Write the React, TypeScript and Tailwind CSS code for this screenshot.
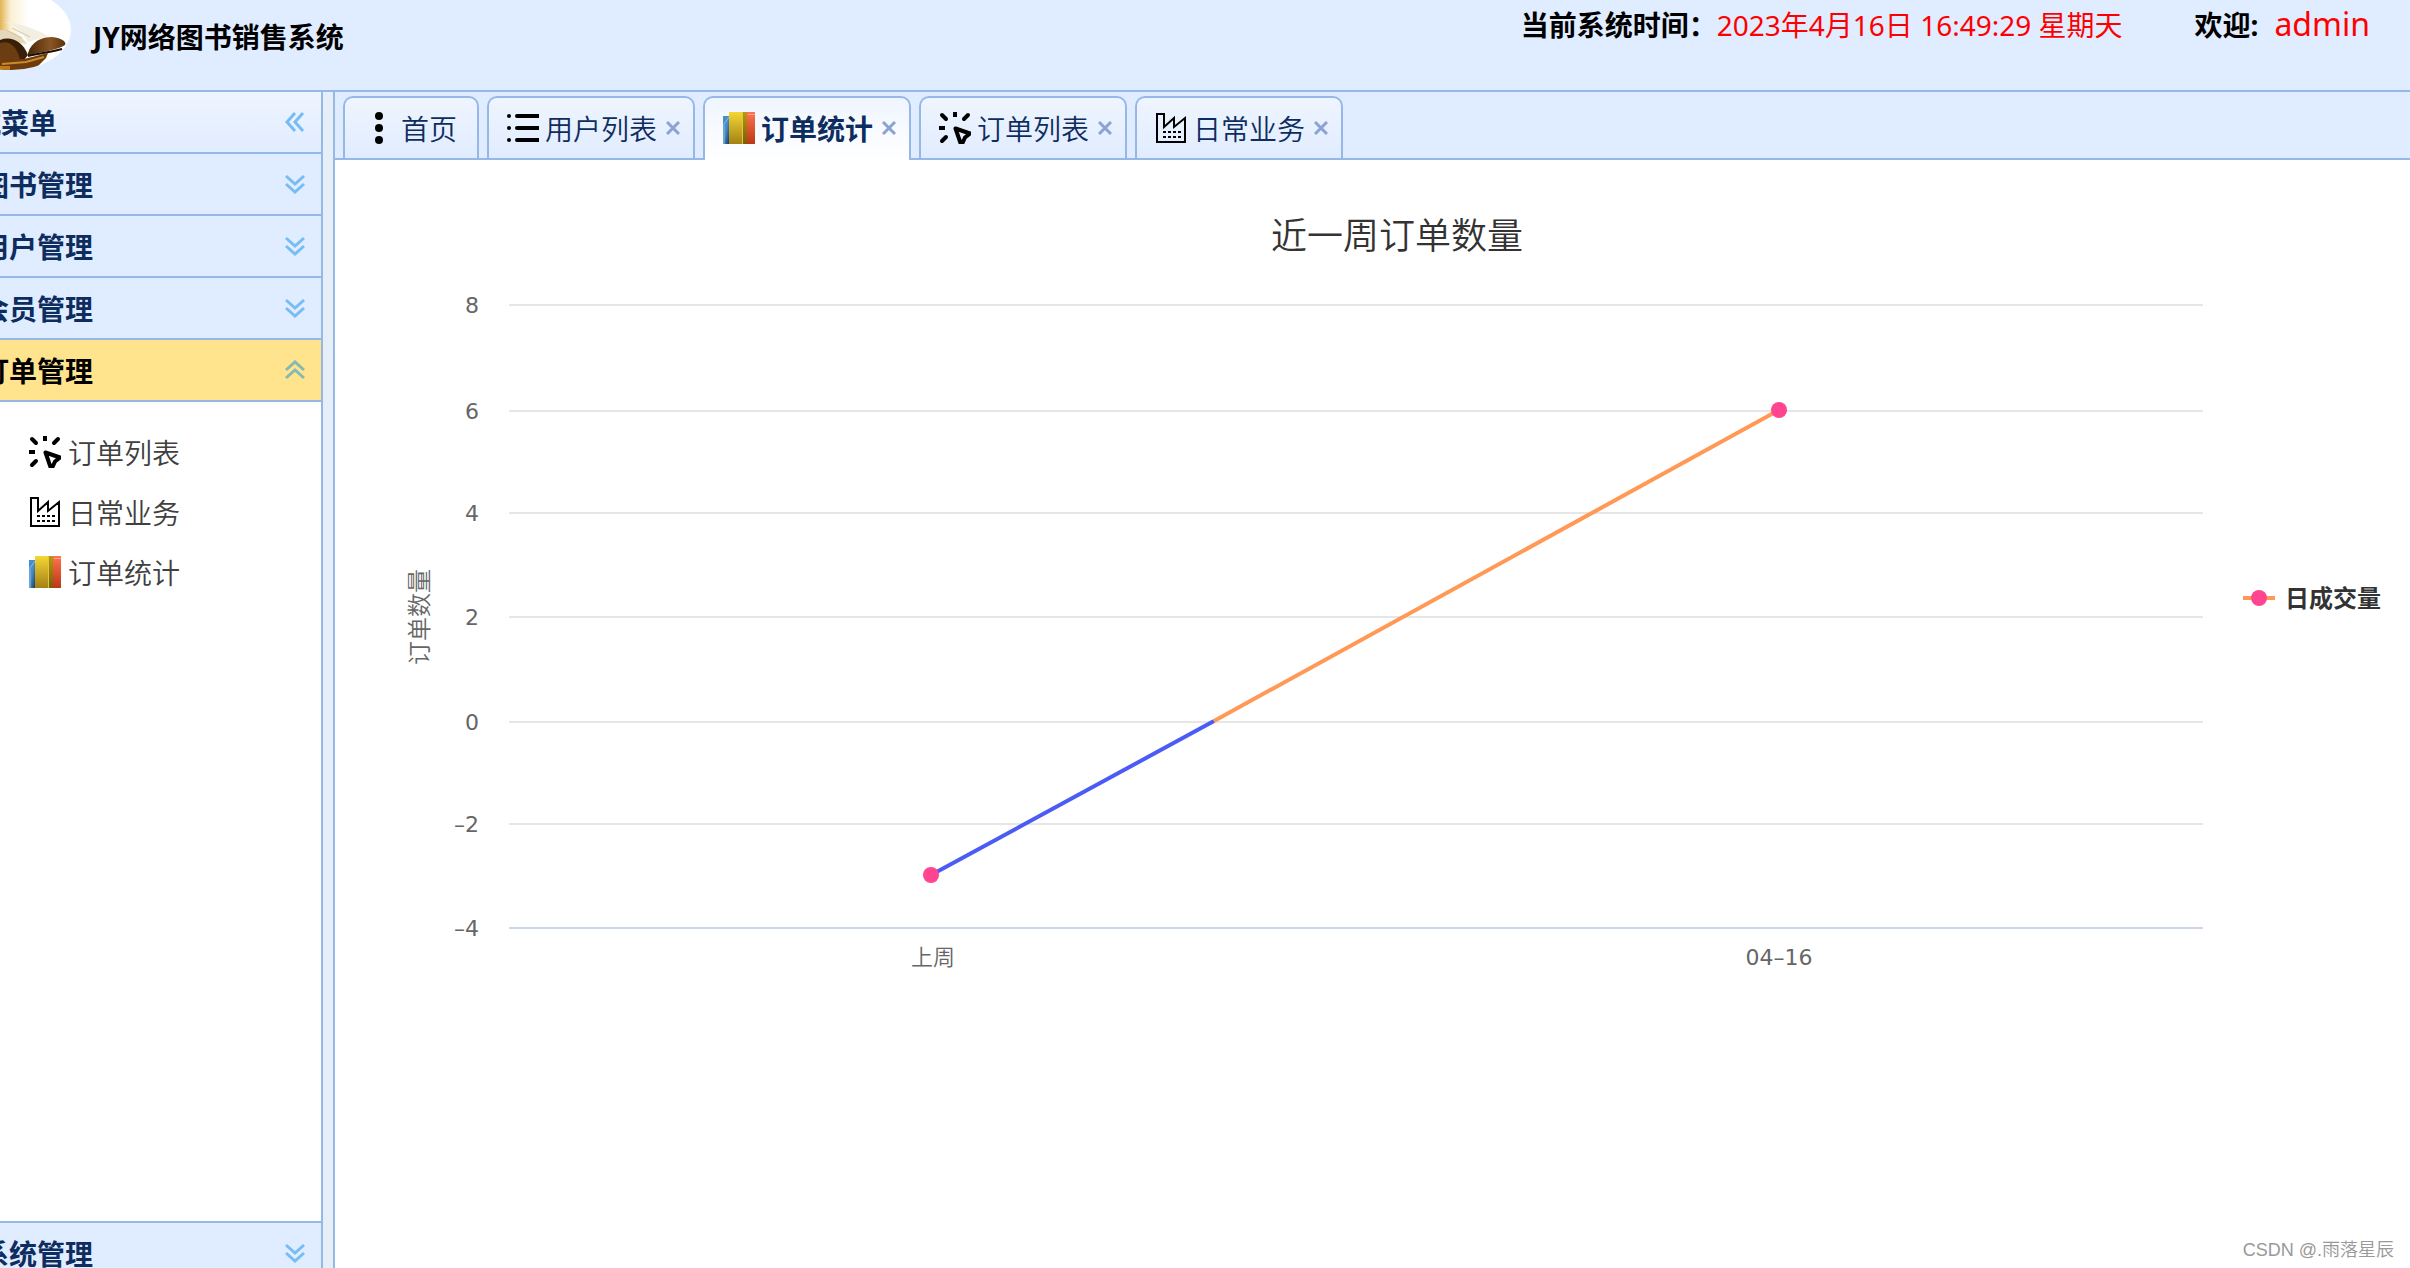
import React, { useState } from 'react';

type IconType = React.FC;

const MoreIcon: IconType = () => (
  <svg viewBox="0 0 32 32" className="h-8 w-8 shrink-0" aria-hidden="true">
    <circle cx="16" cy="4" r="4" />
    <circle cx="16" cy="16" r="4" />
    <circle cx="16" cy="28" r="4" />
  </svg>
);

const ListIcon: IconType = () => (
  <svg viewBox="0 0 32 32" className="h-8 w-8 shrink-0" aria-hidden="true">
    <circle cx="2" cy="4" r="2" />
    <circle cx="2" cy="16" r="2" />
    <circle cx="2" cy="28" r="2" />
    <path d="M10 4H32M10 16H32M10 28H32" stroke="#000" strokeWidth="4" />
    <circle cx="10" cy="4" r="2" />
    <circle cx="10" cy="16" r="2" />
    <circle cx="10" cy="28" r="2" />
  </svg>
);

const ClickIcon: IconType = () => (
  <svg viewBox="0 0 32 32" className="h-8 w-8 shrink-0" fill="none" stroke="#000" strokeWidth="4" aria-hidden="true">
    <path d="M3 3L7 7M29 3L25 7M3 29L7 25" strokeLinecap="round" />
    <path d="M16 0V5M0 16H6" />
    <path d="M16.5 16.5L31 21.5L26 25.5L23.5 31H21.5Z" strokeLinejoin="round" />
  </svg>
);

const FactoryIcon: IconType = () => (
  <svg viewBox="0 0 32 32" className="h-8 w-8 shrink-0" fill="none" stroke="#000" aria-hidden="true">
    <path d="M2 30V2H9V15L19 6V15L30 6V30Z" strokeWidth="2" />
    <path d="M8 20H27M8 25H27" strokeWidth="2" strokeDasharray="3 2" />
  </svg>
);

const BooksIcon: IconType = () => (
  <svg viewBox="0 0 32 32" className="h-8 w-8 shrink-0" aria-hidden="true">
    <defs>
      <linearGradient id="bookBlue" x1="0" y1="0" x2="1" y2="1">
        <stop offset="0" stopColor="#3f8fd2" />
        <stop offset="0.5" stopColor="#4a8cc4" />
        <stop offset="1" stopColor="#123a66" />
      </linearGradient>
      <linearGradient id="bookYellow" x1="0" y1="0" x2="0" y2="1">
        <stop offset="0" stopColor="#f5d733" />
        <stop offset="1" stopColor="#a38114" />
      </linearGradient>
      <linearGradient id="bookGold" x1="0" y1="0" x2="0" y2="1">
        <stop offset="0" stopColor="#b89a10" />
        <stop offset="1" stopColor="#7a5c06" />
      </linearGradient>
      <linearGradient id="bookRed" x1="0" y1="0" x2="0" y2="1">
        <stop offset="0" stopColor="#ff7350" />
        <stop offset="1" stopColor="#bc3714" />
      </linearGradient>
    </defs>
    <rect x="0" y="4" width="6" height="28" fill="url(#bookBlue)" />
    <path d="M1 32V12L6 5" fill="none" stroke="#8cbbe3" strokeWidth="1" />
    <rect x="6" y="0" width="15" height="32" fill="url(#bookYellow)" />
    <rect x="20" y="0" width="5" height="32" fill="url(#bookGold)" />
    <rect x="19" y="0" width="1" height="32" fill="#e0c445" />
    <rect x="24" y="0" width="8" height="32" fill="url(#bookRed)" />
    <rect x="25" y="2" width="7" height="1" fill="#ffa58c" />
  </svg>
);

interface ChevronsProps {
  direction: 'left' | 'down' | 'up';
}

const Chevrons: React.FC<ChevronsProps> = ({ direction }) => {
  const paths = {
    left: 'M10 1L2 10L10 19M18 1L10 10L18 19',
    down: 'M1 2L10 10L19 2M1 10L10 18L19 10',
    up: 'M1 10L10 2L19 10M1 18L10 10L19 18'
  };
  return (
    <svg
      viewBox="0 0 20 20"
      className={`h-5 w-5 shrink-0 ${direction === 'up' ? 'text-[#84b9b4]' : 'text-[#77bdf2]'}`}
      fill="none"
      stroke="currentColor"
      strokeWidth="3"
      aria-hidden="true"
    >
      <path d={paths[direction]} />
    </svg>
  );
};

const Logo = () => (
  <svg viewBox="0 0 71 70" className="h-[70px] w-[71px] shrink-0" role="img" aria-label="logo">
    <defs>
      <clipPath id="logoClip">
        <ellipse cx="11" cy="30" rx="60" ry="40" />
      </clipPath>
      <linearGradient id="logoGlow" x1="0" y1="0" x2="1" y2="0">
        <stop offset="0" stopColor="#e2b455" />
        <stop offset="0.15" stopColor="#fbf0d4" />
        <stop offset="0.4" stopColor="#ffffff" />
      </linearGradient>
      <linearGradient id="logoCover" x1="0" y1="0" x2="1" y2="0">
        <stop offset="0" stopColor="#4a2708" />
        <stop offset="0.6" stopColor="#8a5524" />
        <stop offset="1" stopColor="#5c3210" />
      </linearGradient>
    </defs>
    <g clipPath="url(#logoClip)">
      <rect width="71" height="70" fill="url(#logoGlow)" />
      <path d="M0 22C12 22 22 30 28 42L48 36C34 28 16 22 0 22Z" fill="#f3eee2" />
      <path d="M0 30C10 30 20 34 27 44L0 40Z" fill="#e4d8bb" />
      <path d="M6 30L22 38M12 28L30 37" stroke="#cfc6ae" strokeWidth="1" />
      <path d="M28 53C32 41 42 37 52 37C62 38 67 42 65 45C56 51 42 51 28 56Z" fill="url(#logoCover)" />
      <path d="M0 40C10 36 22 40 28 55L24 60L0 62Z" fill="#3a1f08" />
      <path d="M0 43C8 40 17 45 20 60L0 62Z" fill="#6b3d12" />
      <path d="M0 60L24 59L48 53L46 58L34 70H0Z" fill="#6e3c0c" />
      <path d="M2 64L26 62L44 57" fill="none" stroke="#c98b2e" strokeWidth="2" />
      <path d="M0 66H10V70H0Z" fill="#c17a16" />
      <path d="M28 56C40 53 52 52 62 49" fill="none" stroke="#1f1003" strokeWidth="2" />
    </g>
  </svg>
);

interface Tab {
  title: string;
  icon: IconType;
  closable: boolean;
}

const tabs: Tab[] = [
  { title: '首页', icon: MoreIcon, closable: false },
  { title: '用户列表', icon: ListIcon, closable: true },
  { title: '订单统计', icon: BooksIcon, closable: true },
  { title: '订单列表', icon: ClickIcon, closable: true },
  { title: '日常业务', icon: FactoryIcon, closable: true }
];

const orderLinks = [
  { title: '订单列表', icon: ClickIcon },
  { title: '日常业务', icon: FactoryIcon },
  { title: '订单统计', icon: BooksIcon }
];

const gridLines = [
  { value: '8', y: 305 },
  { value: '6', y: 411 },
  { value: '4', y: 513 },
  { value: '2', y: 617 },
  { value: '0', y: 722 },
  { value: '–2', y: 824 },
  { value: '–4', y: 928 }
];

const Header = () => (
  <header className="flex h-[92px] shrink-0 items-start justify-between border-b-2 border-[#95b8e7] bg-[#e0ecff] pr-10">
    <div className="flex">
      <Logo />
      <h1 className="ml-[22px] mt-[17px] text-[28px] leading-10 font-bold text-black">JY网络图书销售系统</h1>
    </div>
    <div className="mt-1 flex items-baseline text-[28px] leading-10 text-[#ff0000]">
      <span className="font-bold text-black">当前系统时间：</span>
      <time>2023年4月16日 16:49:29 星期天</time>
      <span className="ml-[72px] mr-4 font-bold text-black">欢迎:</span>
      <span className="text-[32px]">admin</span>
    </div>
  </header>
);

interface AccordionTitleProps {
  title: string;
  active?: boolean;
  className?: string;
}

const AccordionTitle: React.FC<AccordionTitleProps> = ({ title, active = false, className = 'border-b-2' }) => (
  <button
    type="button"
    aria-expanded={active}
    className={`flex h-[62px] w-full shrink-0 items-center justify-between border-[#95b8e7] pl-[47px] pr-4 text-[28px] leading-10 font-bold ${
      active ? 'bg-[#ffe48d] text-black' : 'bg-[#e0ecff] text-[#0e2d5f]'
    } ${className}`}
  >
    <span className="pt-0.5">{title}</span>
    <Chevrons direction={active ? 'up' : 'down'} />
  </button>
);

const Sidebar = () => (
  <aside className="-ml-[66px] flex h-[calc(100%+15px)] w-[389px] shrink-0 flex-col border-r-2 border-[#95b8e7] bg-white">
    <div className="flex h-[62px] shrink-0 items-center justify-between border-b-2 border-[#95b8e7] bg-linear-to-b from-[#eff5ff] to-[#e0ecff] pl-[11px] pr-4">
      <h2 className="pt-0.5 text-[28px] leading-10 font-bold text-[#0e2d5f]">导航菜单</h2>
      <button type="button" aria-label="收起">
        <Chevrons direction="left" />
      </button>
    </div>
    <AccordionTitle title="图书管理" />
    <AccordionTitle title="用户管理" />
    <AccordionTitle title="会员管理" />
    <AccordionTitle title="订单管理" active />
    <ul className="flex-1 pt-5 pl-[95px]">
      {orderLinks.map(({ title, icon: Icon }) => (
        <li key={title}>
          <a href="#" className="flex h-[60px] items-center gap-[7px] text-[28px] leading-10 font-[350] text-[#404040]">
            <Icon />
            <span className="pt-0.5">{title}</span>
          </a>
        </li>
      ))}
    </ul>
    <AccordionTitle title="系统管理" className="border-t-2" />
  </aside>
);

interface TabBarProps {
  selected: number;
  onSelect: (index: number) => void;
}

const TabBar: React.FC<TabBarProps> = ({ selected, onSelect }) => (
  <div className="flex h-[68px] shrink-0 items-stretch border-b-2 border-[#95b8e7] bg-[#e0ecff] pt-1 pl-2">
    {tabs.map(({ title, icon: Icon, closable }, index) => (
      <div
        key={title}
        className={`mr-2 flex items-center rounded-t-[10px] border-2 border-b-0 border-[#95b8e7] bg-linear-to-b from-[#eff5ff] pl-[18px] ${
          closable ? 'pr-[13px]' : 'pr-5'
        } ${
          index === selected
            ? '-mb-[2px] to-white pb-[2px] font-bold'
            : 'to-[#e0ecff] font-[350]'
        }`}
      >
        <button
          type="button"
          onClick={() => onSelect(index)}
          className="flex items-center gap-1.5 text-[28px] leading-10 whitespace-nowrap text-[#0e2d5f]"
        >
          <Icon />
          <span className="pt-0.5">{title}</span>
        </button>
        {closable && (
          <button type="button" aria-label={`关闭${title}`} className="ml-[9px]">
            <svg viewBox="0 0 14 14" className="h-3.5 w-3.5" stroke="#8ba3d0" strokeWidth="3" aria-hidden="true">
              <path d="M1 1L13 13M13 1L1 13" />
            </svg>
          </button>
        )}
      </div>
    ))}
  </div>
);

const OrderChart = () => (
  <svg viewBox="335 160 2075 840" className="w-full" role="img" aria-label="近一周订单数量">
    <text x="1397" y="249" textAnchor="middle" fontSize="36" fill="#333333" className="font-[350]">
      近一周订单数量
    </text>
    {gridLines.map(({ value, y }) => (
      <g key={value}>
        <path d={`M509 ${y}H2203`} stroke={value === '–4' ? '#ccd6eb' : '#e6e6e6'} strokeWidth="2" />
        <text x="479" y={y + 8} textAnchor="end" fontSize="22" fill="#666666" className="font-['DejaVu_Sans',sans-serif]">
          {value}
        </text>
      </g>
    ))}
    <text
      transform="translate(428 617) rotate(-90)"
      textAnchor="middle"
      fontSize="24"
      fill="#666666"
      className="font-[350]"
    >
      订单数量
    </text>
    <text x="933" y="965" textAnchor="middle" fontSize="22" fill="#666666" className="font-[350]">
      上周
    </text>
    <text x="1779" y="965" textAnchor="middle" fontSize="22" fill="#666666" className="font-['DejaVu_Sans',sans-serif]">
      04–16
    </text>

    <path d="M931 875L1214 721" stroke="#4b5bf5" strokeWidth="4" />
    <path d="M1214 721L1779 410" stroke="#ff9955" strokeWidth="4" />
    <circle cx="931" cy="875" r="8" fill="#ff4590" />
    <circle cx="1779" cy="410" r="8" fill="#ff4590" />

    <path d="M2243 598H2275" stroke="#ff9955" strokeWidth="4" />
    <circle cx="2259" cy="598" r="8" fill="#ff4590" />
    <text x="2285" y="607" fontSize="24" fontWeight="bold" fill="#333333">
      日成交量
    </text>
  </svg>
);

export default function App() {
  const [selected, setSelected] = useState(2);

  return (
    <div className="relative flex h-screen flex-col overflow-hidden bg-white font-['Noto_Sans','Noto_Sans_CJK_SC',sans-serif]">
      <Header />
      <div className="flex min-h-0 flex-1 bg-[#e6eef8]">
        <Sidebar />
        <main className="ml-[10px] flex min-w-0 flex-1 flex-col border-l-2 border-[#95b8e7] bg-white">
          <TabBar selected={selected} onSelect={setSelected} />
          <OrderChart />
        </main>
      </div>
      <p className="absolute right-4 bottom-1 font-['Liberation_Sans','Noto_Sans_CJK_SC',sans-serif] text-lg font-[350] text-[#999999]">
        CSDN @.雨落星辰
      </p>
    </div>
  );
}
